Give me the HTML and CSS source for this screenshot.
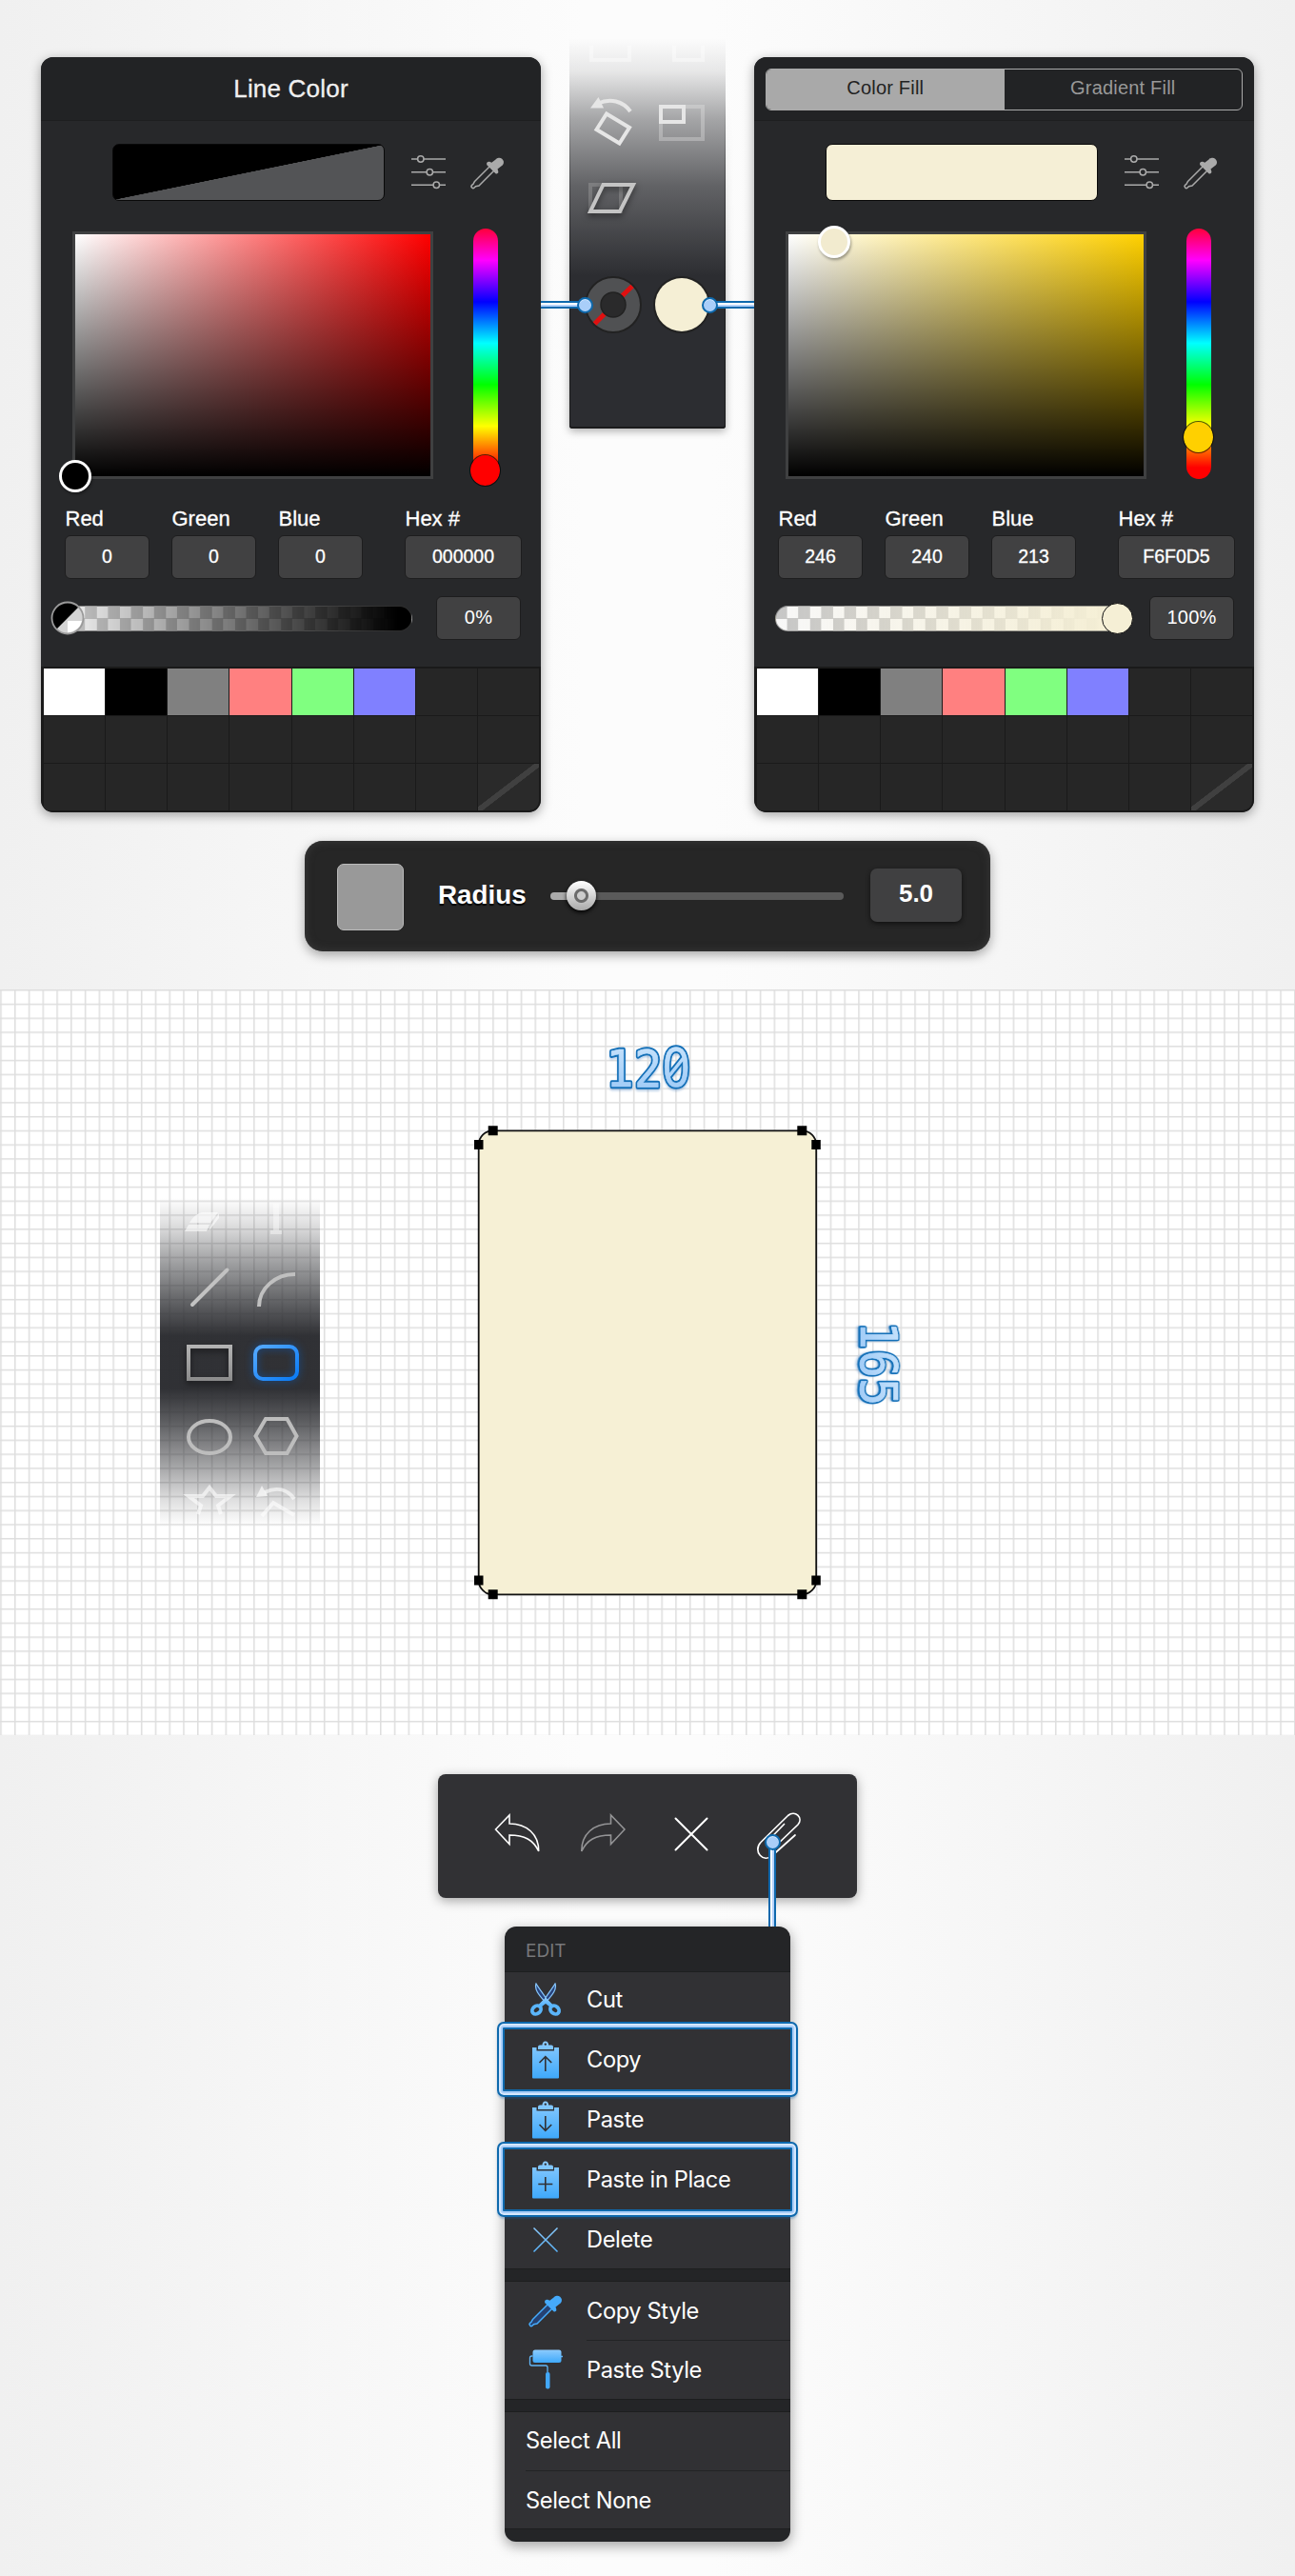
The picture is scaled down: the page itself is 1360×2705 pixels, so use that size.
FILE: index.html
```html
<!DOCTYPE html>
<html lang="en">
<head>
<meta charset="utf-8">
<title>Rounded rectangle</title>
<link rel="stylesheet" href="styles.css">
</head>
<body>
<svg class="defs" width="0" height="0" aria-hidden="true">
  <defs>
    <linearGradient id="sky" x1="0" y1="0" x2="0" y2="1"><stop offset="0" stop-color="#8ccbfd"/><stop offset="1" stop-color="#3fa9fb"/></linearGradient>
    <linearGradient id="skyPage" gradientUnits="userSpaceOnUse" x1="0" y1="0" x2="0" y2="42"><stop offset="0" stop-color="#8ccbfd"/><stop offset="1" stop-color="#3fa9fb"/></linearGradient>
    <symbol id="sliders" viewBox="0 0 38 38">
      <g fill="none" stroke="#aaa" stroke-width="1.5"><path d="M1 5h6.5M14 5h23M1 18.700h16M23.500 18.700h13.500M1 32.300h23M31 32.300h6"/><circle cx="10.800" cy="5" r="3.200"/><circle cx="20.300" cy="18.700" r="3.200"/><circle cx="27.300" cy="32.300" r="3.200"/></g>
    </symbol>
    <symbol id="dropper" viewBox="0 0 38 38">
      <path d="M5.500 28.500 21.500 12.500l4.500 4.500L10 33l-3.500.7-1.300 1.300a1.800 1.800 0 0 1-2.600-2.600L4 31.200z" fill="var(--glass,none)" stroke="currentColor" stroke-width="1.500"/>
      <path d="M27.500 5.500a4.700 4.700 0 0 1 7.500 5.800L29.500 15.600l.8 2.400a2 2 0 0 1-2.800 2.300L18.300 11.200a2.400 2.400 0 0 1 2.800-3.400l2.200.9z" fill="currentColor"/>
    </symbol>
    <symbol id="board" viewBox="0 0 28 40">
      <path fill="url(#sky)" d="M0 7h4.500v3.500H23V7H28v31.500a1 1 0 0 1-1 1H1a1 1 0 0 1-1-1zM6 9V6.500Q6 4.500 8 4.500h2.500C10.500 2.500 11.500.5 13.800.5s3.300 2 3.300 4H20Q22 4.500 22 6.500V9z"/>
      <circle cx="13.800" cy="3.600" r="1.200" fill="#313134"/>
    </symbol>
  </defs>
</svg>

<section class="colors">
  <div class="row">
    <div class="panel">
      <header class="head title">Line Color</header>
      <div class="preview-row">
        <div class="preview none"></div>
        <svg class="sl" width="38" height="38"><use href="#sliders"/></svg>
        <svg class="dr" width="38" height="38"><use href="#dropper"/></svg>
      </div>
      <div class="picker">
        <div class="sv red"><i class="knob sv-black"></i></div>
        <div class="hue"><i class="hue-knob at-red"></i></div>
      </div>
      <div class="fields">
        <label>Red<span>0</span></label><label>Green<span>0</span></label><label>Blue<span>0</span></label><label class="hex">Hex #<span>000000</span></label>
      </div>
      <div class="alpha-row">
        <div class="alpha to-black"><svg class="half" width="36" height="36" viewBox="0 0 36 36"><circle cx="18" cy="18" r="16.500" fill="#d4d4d4"/><path d="M18 21h15q-2 10-15 12.500z" fill="#fff"/><path d="M29.700 6.300A16.500 16.500 0 0 0 6.300 29.700z" fill="#000"/><circle cx="18" cy="18" r="16.500" fill="none" stroke="#9a9a9a" stroke-width="1.800"/></svg></div>
        <span class="box">0%</span>
      </div>
      <div class="swatches">
        <i class="c1"></i><i class="c2"></i><i class="c3"></i><i class="c4"></i><i class="c5"></i><i class="c6"></i><i></i><i></i>
        <i></i><i></i><i></i><i></i><i></i><i></i><i></i><i></i>
        <i></i><i></i><i></i><i></i><i></i><i></i><i></i><i class="slash"></i>
      </div>
    </div>

    <div class="dock">
      <svg width="164" height="410" viewBox="598 40 164 410">
        <g fill="none" stroke="#fff" stroke-width="4" opacity=".4"><path d="M621 48v15h40V48M708 48v15h30V48"/></g>
        <g fill="none" stroke="#e6e6e6" stroke-width="4">
          <path d="M637 119.500 661 134 650.500 150.500 626.500 136z"/>
          <path d="M662 117C654 106 641 103 628 108.500"/><path d="M620 113.500 628.500 102 634 113.500z" fill="#e6e6e6" stroke="none"/>
          <path d="M694 112h44v34h-44z" opacity=".35"/>
          <path d="M694 112h24v16h-24z"/>
        </g>
        <path d="M620 194h32v28h-32z" fill="none" stroke="#b0b0b0" stroke-width="4" opacity=".35"/>
        <path class="lift" d="M633.500 194H665L651 222H620z" fill="none" stroke="#c4c4c4" stroke-width="4"/>
        <circle cx="644" cy="320" r="30" fill="#222"/><circle cx="644" cy="320" r="20.500" fill="none" stroke="#505153" stroke-width="15"/>
        <path d="M664 300.500 653 311M635 329.500 624.500 340" stroke="#e01010" stroke-width="5"/><circle cx="644" cy="320" r="13" fill="#2a2a2b" stroke="#222" stroke-width="1.500"/>
        <circle cx="716" cy="320" r="30" fill="#222"/><circle cx="716" cy="320" r="28" fill="#f5efd5"/>
      </svg>
      <i class="link left"></i><i class="link right"></i>
    </div>

    <div class="panel">
      <header class="head"><div class="tabs"><span class="on">Color Fill</span><span>Gradient Fill</span></div></header>
      <div class="preview-row">
        <div class="preview cream"></div>
        <svg class="sl" width="38" height="38"><use href="#sliders"/></svg>
        <svg class="dr" width="38" height="38"><use href="#dropper"/></svg>
      </div>
      <div class="picker">
        <div class="sv gold"><i class="knob sv-cream"></i></div>
        <div class="hue"><i class="hue-knob at-gold"></i></div>
      </div>
      <div class="fields">
        <label>Red<span>246</span></label><label>Green<span>240</span></label><label>Blue<span>213</span></label><label class="hex">Hex #<span>F6F0D5</span></label>
      </div>
      <div class="alpha-row">
        <div class="alpha to-cream"><i class="end"></i></div>
        <span class="box">100%</span>
      </div>
      <div class="swatches">
        <i class="c1"></i><i class="c2"></i><i class="c3"></i><i class="c4"></i><i class="c5"></i><i class="c6"></i><i></i><i></i>
        <i></i><i></i><i></i><i></i><i></i><i></i><i></i><i></i>
        <i></i><i></i><i></i><i></i><i></i><i></i><i></i><i class="slash"></i>
      </div>
    </div>
  </div>

  <div class="radius">
    <i class="chip"></i>
    <b>Radius</b>
    <div class="track"><i class="thumb"></i></div>
    <b class="val">5.0</b>
  </div>
</section>

<section class="canvas">
  <svg width="1360" height="783" viewBox="0 1039 1360 783">
    <defs>
      <pattern id="grid" patternUnits="userSpaceOnUse" x="0.200" y="1039" width="14.770" height="14.770"><path d="M0 .8H14.770M.8 0V14.770" stroke="#000" stroke-opacity=".13" stroke-width="1.500" fill="none"/></pattern>
      <linearGradient id="fade" x1="0" y1="0" x2="0" y2="1"><stop offset="0" stop-color="#2c2d31" stop-opacity="0"/><stop offset=".08" stop-color="#2c2d31" stop-opacity=".15"/><stop offset=".2" stop-color="#2c2d31" stop-opacity=".46"/><stop offset=".33" stop-color="#2c2d31" stop-opacity=".78"/><stop offset=".42" stop-color="#2c2d31" stop-opacity=".98"/><stop offset=".58" stop-color="#2c2d31" stop-opacity=".98"/><stop offset=".68" stop-color="#2c2d31" stop-opacity=".77"/><stop offset=".82" stop-color="#2c2d31" stop-opacity=".42"/><stop offset=".92" stop-color="#2c2d31" stop-opacity=".15"/><stop offset="1" stop-color="#2c2d31" stop-opacity="0"/></linearGradient>
      <linearGradient id="metal" gradientUnits="userSpaceOnUse" x1="0" y1="1412" x2="0" y2="1450"><stop offset="0" stop-color="#b4b4b4"/><stop offset="1" stop-color="#8b8b8b"/></linearGradient>
      <linearGradient id="active" x1="0" y1="0" x2="1" y2="1"><stop offset="0" stop-color="#55a9ff"/><stop offset="1" stop-color="#0a7bf5"/></linearGradient>
      <linearGradient id="digits" gradientUnits="userSpaceOnUse" x1="0" y1="-40" x2="0" y2="0"><stop offset="0" stop-color="#c3e0fb"/><stop offset="1" stop-color="#a3cdf7"/></linearGradient>
    </defs>
    <rect y="1039" width="1360" height="783" fill="url(#grid)"/>
    <rect x="168" y="1258" width="168" height="345" fill="url(#fade)"/>
    <g fill="none" stroke-width="4">
      <g fill="#fff" fill-opacity=".6" stroke="none"><path d="M194 1293l4-7h22l-3 7zM199 1284q5-9 13-11h17l-8 11zM222 1286l8-12v5l-11 14z"/><path d="M287 1264h6v28h3v4h-12v-4h3z" opacity=".7"/></g>
      <path d="M202 1370 238.500 1333.500" stroke="#c2c2c2" stroke-linecap="round"/>
      <path d="M272 1372C272 1353 289 1338 310 1338" stroke="#c0c0c0"/>
      <path class="lift" d="M198 1414h44v34h-44z" stroke="url(#metal)"/>
      <rect class="glow" x="268" y="1414" width="44" height="34" rx="8" stroke="url(#active)"/>
      <ellipse cx="220" cy="1509" rx="22" ry="17" stroke="#bdbdbd"/>
      <path d="M279 1490h22.500L311.500 1508 301.500 1526H279L268.500 1508z" stroke="#bdbdbd"/>
      <path d="M208 1590l3-9-13-10h15l7-9 7 9h15l-13 10 3 9" stroke="#fff" stroke-opacity=".6"/>
      <path d="M309 1574C302 1564 291 1561 278 1567M275 1592l12-14 22 13" stroke="#fff" stroke-opacity=".6"/><path d="M269 1572l6-12 6 11z" fill="#fff" fill-opacity=".65"/>
    </g>
    <rect x="502.700" y="1187.300" width="354.500" height="487" rx="14.800" fill="#f6f0d5" stroke="#111" stroke-width="1.800"/>
    <path fill="#000" d="M512.700 1182.300h10v10h-10zM837.300 1182.300h10v10h-10zM498 1197h9.500v10H498zM852.300 1197h9.500v10h-9.500zM498 1654.500h9.500v10H498zM852.300 1654.500h9.500v10h-9.500zM512.700 1669.300h10v10h-10zM837.300 1669.300h10v10h-10z"/>
    <g class="dim" transform="translate(680.500 1140.500) scale(.9 1)">
      <g class="edge"><text y="0" x="-33 0 33">12<tspan class="zero">0</tspan></text><path d="M24 -10 41 -29"/></g>
      <g class="core" aria-hidden="true"><text y="0" x="-33 0 33">12<tspan class="zero">0</tspan></text><path d="M24 -10 41 -29"/></g>
    </g>
    <g class="dim" transform="translate(903.500 1432) rotate(90) scale(.9 1)">
      <text class="edge" y="0" x="-33 0 33">165</text><text class="core" y="0" x="-33 0 33" aria-hidden="true">165</text>
    </g>
  </svg>
</section>

<section class="editing">
  <div class="toolbar">
    <svg width="48" height="50" viewBox="519 1903 48 50"><path d="M520.500 1921 535 1906v9C553 1915 566 1926 565.700 1944 560 1932 551 1927 535 1927v9.500z" fill="none" stroke="#fff" stroke-width="1.600"/></svg>
    <svg class="t2" width="48" height="50" viewBox="519 1903 48 50"><path transform="translate(1086.500) scale(-1 1)" d="M520.500 1921 535 1906v9C553 1915 566 1926 565.700 1944 560 1932 551 1927 535 1927v9.500z" fill="none" stroke="#949496" stroke-width="1.600"/></svg>
    <svg class="t3" width="48" height="50" viewBox="702 1903 48 50"><path d="M709.500 1909.500 742.500 1942.500M742.500 1909.500 709.500 1942.500" stroke="#fff" stroke-width="2" stroke-linecap="round"/></svg>
    <svg class="t4" width="48" height="50" viewBox="794 1903 48 50"><path d="M823.500 1915.500 807 1932.500a4.500 4.500 0 0 0 7 6.500L838 1916C844 1909 835 1900 827.500 1906.500L799 1934.500C790 1944 802 1957 811 1948.500L835 1927" fill="none" stroke="#fff" stroke-width="1.700" stroke-linecap="round"/></svg>
    <i class="link down"></i>
  </div>

  <div class="menu">
    <div class="cap">EDIT</div>
    <div class="group first">
      <div class="item"><svg width="34" height="36" viewBox="556 2081 34 36"><path d="M563 2082c-2 6 3 12 8.500 18l2-2.500C570 2092 566 2087 563 2082zM583 2082c2 6-3 12-8.500 18l-2-2.500C576 2092 580 2087 583 2082z" fill="#27437e" stroke="#86c5fa" stroke-width="1.300"/><path d="M570.500 2099l3-2 9 9-3 2-6.500-5-6.500 5-3-2z" fill="url(#sky)"/><g fill="none" stroke="#5ab5fa" stroke-width="3.800"><ellipse cx="563.500" cy="2109.500" rx="5" ry="4" transform="rotate(-40 563.500 2109.500)"/><ellipse cx="582.500" cy="2109.500" rx="5" ry="4" transform="rotate(40 582.500 2109.500)"/></g></svg><span>Cut</span></div>
      <div class="item marked"><svg width="28" height="40" viewBox="0 0 28 40"><use href="#board"/><path d="M13.800 32V17M7.500 23l6.300-6.300L20.200 23" fill="none" stroke="#313134" stroke-width="1.600"/></svg><span>Copy</span></div>
      <div class="item"><svg width="28" height="40" viewBox="0 0 28 40"><use href="#board"/><path d="M13.800 16v15M7.500 25l6.300 6.300L20.200 25" fill="none" stroke="#313134" stroke-width="1.600"/></svg><span>Paste</span></div>
      <div class="item marked"><svg width="28" height="40" viewBox="0 0 28 40"><use href="#board"/><path d="M13.800 17v15M6.300 24.500h15" fill="none" stroke="#313134" stroke-width="1.600"/></svg><span>Paste in Place</span></div>
      <div class="item"><svg width="28" height="28" viewBox="0 0 28 28"><path d="M1.500 1.500l25 25M26.500 1.500l-25 25" stroke="url(#skyPage)" stroke-width="1.500"/></svg><span>Delete</span></div>
    </div>
    <div class="group">
      <div class="item"><svg class="blue" width="38" height="38"><use href="#dropper"/></svg><span>Copy Style</span></div>
      <div class="item"><svg width="36" height="42" viewBox="0 0 36 42"><rect x="4.500" y=".5" width="30" height="13.500" rx="2.500" fill="url(#sky)"/><path d="M34 7.500h2M4.500 7H3.500Q1.500 7 1.500 9v6Q1.500 17 3.500 17H18q2 0 2 2v5" fill="none" stroke="#62b5f5" stroke-width="1.300"/><rect x="18" y="24" width="4.500" height="17.500" rx="2" fill="#42a8fa"/></svg><span>Paste Style</span></div>
    </div>
    <div class="group plain">
      <div class="item"><span>Select All</span></div>
      <div class="item"><span>Select None</span></div>
    </div>
  </div>
</section>
</body>
</html>
```
FILE: styles.css
```css
*, *::before, *::after { box-sizing: border-box; }
body { margin: 0; width: 1360px; font-family: "Liberation Sans", Arial, sans-serif; background: #f8f8f8; }
i { display: block; font-style: normal; }
svg { display: block; flex: none; }
.defs { position: absolute; }

.colors, .editing { background: linear-gradient(90deg, #f0f0f0, #fcfcfc 45%, #fcfcfc 55%, #f0f0f0); }
.colors { height: 1039px; padding: 60px 43px 0; }
.row { display: flex; justify-content: space-between; height: 793px; }

.panel { width: 525px; height: 793px; border-radius: 13px; overflow: hidden; background: #27282a; box-shadow: 0 3px 12px rgba(0,0,0,.36); color: #fff; position: relative; z-index: 1; }
.head { height: 67px; background: #222325; border-bottom: 1px solid #1e1f20; display: flex; align-items: center; justify-content: center; }
.title { font-size: 26px; letter-spacing: .2px; color: #f0f0f0; padding-top: 1px; -webkit-text-stroke: .3px; }
.tabs { width: 501px; height: 44px; margin-top: 1px; display: flex; border: 1.5px solid #aaa; border-radius: 6px; overflow: hidden; }
.tabs span { flex: 1; display: flex; align-items: center; justify-content: center; padding-bottom: 3px; font-size: 20px; letter-spacing: .2px; color: #999; }
.tabs .on { background: #a9a9a9; color: #222; }

.preview-row { display: flex; align-items: center; margin-top: 24px; padding-left: 75px; }
.preview { width: 286px; height: 60px; border-radius: 7px; border: 1.5px solid #090909; }
.none { background: linear-gradient(to bottom right, #000 49.800%, #535456 50.200%); }
.cream { background: #f5efd6; }
.sl { margin-left: 27px; }
.dr { margin-left: 24px; color: #aaa; }

.picker { display: flex; align-items: flex-end; gap: 42px; height: 263px; margin-top: 29px; padding-left: 33px; }
.sv { position: relative; width: 379px; height: 260px; border: 3px solid #3f4041; }
.red { background: linear-gradient(to top, #000, transparent) padding-box, linear-gradient(to right, #fff, #f00) padding-box; }
.gold { background: linear-gradient(to top, #000, transparent) padding-box, linear-gradient(to right, #fff, #ffd000) padding-box; }
.knob { position: absolute; width: 34px; height: 34px; border: 3px solid #fff; border-radius: 50%; box-shadow: 1px 2px 3px rgba(0,0,0,.35); }
.sv-black { left: -17px; bottom: -17px; background: #000; }
.sv-cream { left: 31px; top: -9px; background: #f2ebcf; }
.hue { position: relative; width: 26px; height: 263px; border-radius: 13px; background: linear-gradient(to bottom, #f00 -10px, #f0f 33.500px, #00f 77px, #0ff 120.500px, #0f0 164px, #ff0 207.500px, #f00 251px); }
.hue-knob { position: absolute; left: -4px; width: 33px; height: 34px; border: 1.500px solid rgba(0,0,0,.65); border-radius: 50%; background-clip: padding-box; }
.at-red { top: 237px; background-color: #f00; }
.at-gold { top: 202px; background-color: #ffd000; }

.fields { display: flex; gap: 23px; margin-top: 28px; padding-left: 25px; }
.fields label { width: 89px; font-size: 22px; line-height: 28px; white-space: nowrap; text-indent: .5px; -webkit-text-stroke: .3px; }
.fields .hex { width: 123px; margin-left: 21px; }
.fields span, .box { display: flex; align-items: center; justify-content: center; height: 46px; border: 1px solid #1d1d1e; border-radius: 6px; background: #414142; font-size: 19.500px; text-indent: 0; padding-bottom: 2px; }
.fields span { margin-top: 3px; }
.alpha-row { display: flex; align-items: center; gap: 25px; height: 46px; margin-top: 18px; padding-left: 22px; }
.box { width: 89px; font-size: 20px; letter-spacing: .2px; }
.alpha { position: relative; width: 368px; height: 27px; border-radius: 14px; border: 1px solid #55555588; }
.to-black { background: linear-gradient(90deg, transparent, #000 96%), conic-gradient(#f4f4f4 25%, #c6c6c6 0 50%, #f4f4f4 0 75%, #c6c6c6 0) -1px 0 / 24.200px 25px; }
.to-cream { background: linear-gradient(90deg, transparent, #f5efd5 96%), conic-gradient(#f8f8f8 25%, #c6c6c6 0 50%, #f8f8f8 0 75%, #c6c6c6 0) -1px 0 / 24.200px 25px; }
.half { position: absolute; left: -13px; top: -6px; }
.end { position: absolute; right: -9px; top: -4px; width: 33px; height: 33px; border-radius: 50%; background: #f5efd5; border: 1.500px solid #111; }
.swatches { display: grid; grid-template-columns: repeat(8, 1fr); grid-auto-rows: 49px; gap: 1px; padding: 2px 2px 2px 3px; margin-top: 28px; background: #1a1a1a; border-radius: 0 0 13px 13px; overflow: hidden; }
.swatches i { background: #262626; }
.swatches .c1 { background: #fff; } .swatches .c2 { background: #000; } .swatches .c3 { background: #808080; }
.swatches .c4 { background: #ff8080; } .swatches .c5 { background: #80ff80; } .swatches .c6 { background: #8080ff; }
.swatches .slash { background: linear-gradient(to bottom right, transparent 46%, #404040 46.500% 53.500%, transparent 54%), #2a2a2a; border-bottom-right-radius: 10px; }

.dock { position: relative; width: 164px; height: 410px; margin-top: -20px; border-radius: 0 0 3px 3px; background: linear-gradient(to bottom, rgba(44,45,49,0), rgba(44,45,49,.1) 35px, rgba(44,45,49,.42) 85px, rgba(44,45,49,.74) 155px, #2c2d31 250px); }
.dock::after { content: ""; position: absolute; inset: 0; border: solid #1b1b1c; border-width: 0 1px 2px; border-radius: 0 0 3px 3px; box-shadow: 0 3px 8px rgba(0,0,0,.3); mask: linear-gradient(transparent 15%, #000 65%) -18px 0 / 200px 440px no-repeat no-clip; }
.lift { filter: drop-shadow(0 3px 3px rgba(0,0,0,.5)); }
.glow { filter: drop-shadow(0 0 4px rgba(0,100,220,.6)); }
.link { position: absolute; z-index: 2; background: linear-gradient(to bottom, #0e69ad 2px, #fff 2px 4px, #b4d2fb 4px 6px, #0e69ad 6px); height: 8px; top: 276px; }
.link::after { content: ""; position: absolute; top: -4px; width: 17px; height: 17px; border-radius: 50%; border: 2px solid #0e69ad; background: #a9cef9; box-shadow: inset 0 1px 0 #d9eaff; }
.left { left: -30px; width: 42px; } .left::after { right: -13px; }
.right { right: -30px; width: 42px; } .right::after { left: -13px; }

.radius { display: flex; align-items: center; width: 720px; height: 116px; margin: 30px auto 0; padding-left: 34px; border-radius: 19px; background: #262626; box-shadow: 0 4px 12px rgba(0,0,0,.34), inset 0 0 10px #3b3b3b; color: #fff; }
.chip { width: 70px; height: 70px; margin-top: 2px; border-radius: 7px; background: #999; border: 1.500px solid #bbb; }
.radius b { width: 92px; margin: -2px 0 0 36px; font-size: 27.800px; text-shadow: 0 2px 1px #000; }
.track { position: relative; width: 308px; height: 8px; margin-left: 26px; border-radius: 4px; background: linear-gradient(90deg, #aaa 33px, #5a5a5a 33px); }
.thumb { position: absolute; left: 17px; top: -12px; width: 31px; height: 31px; border-radius: 50%; background: radial-gradient(circle at center, #ccc 0 4px, #6b6b6b 5px 7px, transparent 8px), linear-gradient(#fff, #aaa); box-shadow: 0 2px 4px #000; }
.radius .val { display: flex; align-items: center; justify-content: center; width: 96px; height: 56px; margin: -3px 0 0 28px; padding-bottom: 2px; border-radius: 7px; background: #404041; font-size: 26px; text-shadow: none; box-shadow: 0 2px 5px #111; }

.canvas { background: #fff; height: 783px; }
.dim { font: 54px "DejaVu Sans Mono", monospace; text-anchor: middle; stroke-linejoin: round; }
.dim .zero { font-family: "Noto Sans", sans-serif; font-size: 56px; }
.dim .edge { fill: #1470b8; stroke: #1470b8; stroke-width: 4.500px; filter: drop-shadow(0 2px 1px rgba(30,100,180,.3)); }
.dim .edge path { stroke-width: 7.500px; }
.dim .core { fill: url(#digits); stroke: url(#digits); stroke-width: .7px; }
.dim .core path { stroke-width: 3.500px; }

.editing { height: 883px; padding-top: 41px; font-family: Inter, "Noto Sans", sans-serif; }
.toolbar { position: relative; display: flex; width: 440px; height: 130px; margin: 0 auto; padding: 40px 0 0 59px; border-radius: 8px; background: #313134; box-shadow: 0 3px 12px rgba(0,0,0,.34); }
.t2 { margin-left: 42px; } .t3 { margin-left: 45px; } .t4 { margin-left: 44px; }
.down { left: 347px; top: 72px; width: 8px; height: 88px; background: linear-gradient(to right, #0e69ad 2px, #fff 2px 4px, #b4d2fb 4px 6px, #0e69ad 6px); }
.down::after { left: -4.500px; top: -9px; }
.menu { width: 300px; height: 646px; margin: 30px auto 0; border-radius: 12px; background: #242527; color: #fff; box-shadow: 0 4px 14px rgba(0,0,0,.38); display: flex; flex-direction: column; }
.cap { height: 47px; padding: 14px 22px 0; font-size: 19px; line-height: 24px; color: #77787a; }
.group { background: #313134; margin-bottom: 12px; box-shadow: inset 0 1px #1d1e1f, inset 0 -1px #1d1e1f; }
.item { position: relative; display: grid; grid-template-columns: 86px 1fr; align-items: center; height: 62.300px; font-size: 23.600px; letter-spacing: -.35px; }
.item svg { justify-self: center; }
.item + .item:not(.marked)::before { content: ""; position: absolute; left: 86px; right: 0; top: 0; border-top: 1px solid #222325; }
.first .item { height: 63px; }
.first .item:first-child { height: 61px; padding-bottom: 2px; }
.group.plain .item { grid-template-columns: 1fr; padding-left: 22px; }
.group.plain .item + .item::before { left: 22px; }
.blue { color: #45aafb; --glass: #254172; }
.marked::after { content: ""; position: absolute; inset: -8px -8px; border-radius: 7px; border: 2px solid #0e69ad; box-shadow: inset 0 0 0 2px #d5e7fd, inset 0 0 0 4px #a9cef9, inset 0 0 0 6px #0e69ad, 0 2px 2px rgba(20,100,180,.3); z-index: 2; }
```
